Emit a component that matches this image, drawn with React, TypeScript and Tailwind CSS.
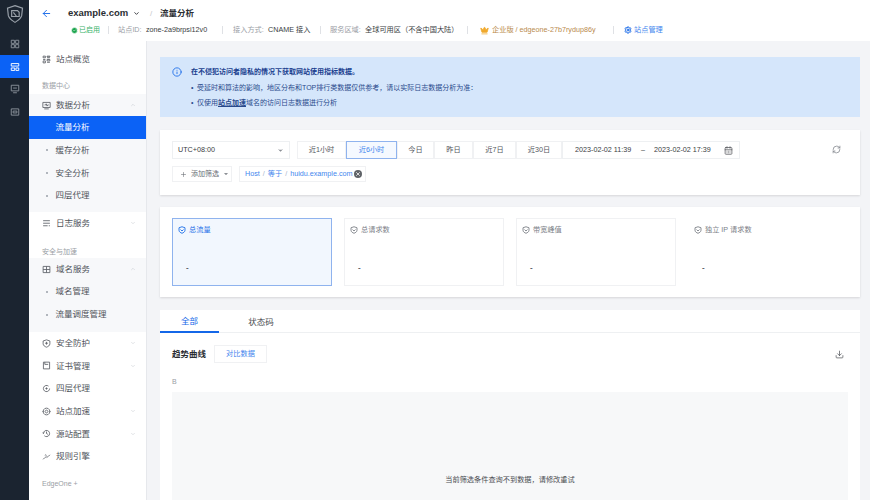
import { ArrowLeft, CalendarDays, ChevronDown, ChevronUp, CircleCheck, Crown, Download, Info, Plus, RefreshCw, Settings, X } from 'lucide-react'
import type { ReactNode } from 'react'

const font = 'font-["Liberation_Sans","Noto_Sans_CJK_SC",sans-serif]'

function Glyph({ children, className = '' }: { children: ReactNode; className?: string }) {
  return (
    <svg viewBox="0 0 16 16" fill="none" stroke="currentColor" strokeWidth={1.5} className={`shrink-0 ${className}`}>
      {children}
    </svg>
  )
}

const icons: Record<string, ReactNode> = {
  overview: <path d="M2 2h4v3H2zM9 2h5v1.500H9zM9 5h5M2 8h4M2 10.500h4v3.500H2zM9 8h5v2.500H9zM9 13h5" />,
  data: <path d="M1.500 2.500h13v9h-13zM4 14h8M4.500 7h2l1-2 1.500 4 1-2h2" />,
  log: <path d="M2 3h12M2 7.500h12M2 12h8M12 12h2" />,
  domain: <path d="M2 2.500h12v11H2zM8 2.500v11M2 8h12" />,
  shield: <path d="M8 1.500l6 2v5c0 3-3 5-6 6-3-1-6-3-6-6v-5zM8 5v5M5.500 7.500h5" />,
  cert: <path d="M2.500 2h11v12h-11zM5 2v4h6" />,
  layer4: <path d="M13.500 8a5.500 5.500 0 1 1-2-4.200M8 6v4M6 8h4" />,
  speed: <path d="M8 2a6 6 0 1 1-.01 0M8 5.500a2.500 2.500 0 1 1-.01 0M1 8h2M13 8h2" />,
  origin: <path d="M2.500 8a5.500 5.500 0 1 1 1.700 4M8 4.500V8l2.500 1.500M1 6.500l1.500 1.500L4 6.500" />,
  rule: <path d="M2 13l3-3c1-1 2-1 3 0M8 8c1 1 2 1 3 0l3-3M5 6a2 2 0 0 1 3 0" />,
}

type NavRow = { label: string; icon?: string; chevron?: 'up' | 'down'; sub?: boolean; active?: boolean }

function Row({ label, icon, chevron, sub, active }: NavRow) {
  return (
    <div className={`h-[22.7px] flex items-center ${active ? 'bg-[#0b62f6] text-white' : 'text-[#50545b]'} ${sub ? 'pl-[26.5px]' : 'pl-[13px]'} pr-[10px] text-[8.500px]`}>
      {sub && !active && <span className="absolute ml-[-10px] w-[2px] h-[2px] bg-[#9aa0a8] rounded-full" />}
      {icon && <Glyph className="w-[9px] h-[9px] mr-[5px] text-[#5b5f66]">{icons[icon]}</Glyph>}
      <span className="flex-1 whitespace-nowrap">{label}</span>
      {chevron === 'up' && <ChevronUp className="w-[6px] h-[6px] text-[#c3c6cc]" />}
      {chevron === 'down' && <ChevronDown className="w-[6px] h-[6px] text-[#c3c6cc]" />}
    </div>
  )
}

function SectionLabel({ text, className = '' }: { text: string; className?: string }) {
  return <div className={`pl-[13px] text-[7px] text-[#9a9ea5] h-[14px] leading-[14px] ${className}`}>{text}</div>
}

function Sep() {
  return <span className="w-px h-[8px] shrink-0 bg-[#dfe1e5]" />
}

function Metric({ label, active, plain }: { label: string; active?: boolean; plain?: boolean }) {
  return (
    <div className={`w-[160px] h-[68px] pt-[6px] px-[5px] flex flex-col border ${active ? 'bg-[#f2f7fe] border-[#8fb3ee]' : plain ? 'bg-white border-transparent' : 'bg-white border-[#f0f1f3]'}`}>
      <div className={`h-[10px] flex items-center gap-[3px] text-[7.200px] ${active ? 'text-[#1e6fe8]' : 'text-[#7d8188]'}`}>
        <svg viewBox="0 0 16 16" fill="none" stroke="currentColor" strokeWidth={1.800} className="w-[8px] h-[8px]">
          <path d="M8 1.500l6 2v5c0 3-3 5-6 6-3-1-6-3-6-6v-5zM5 7l3 3 3-3" />
        </svg>
        <span>{label}</span>
      </div>
      <div className="mt-[27px] ml-[8px] text-[8px] leading-[12px] font-bold text-[#55585e]">-</div>
    </div>
  )
}

const ranges = [
  { label: '近1小时', w: 'w-[49px]' },
  { label: '近6小时', w: 'w-[51px]', active: true },
  { label: '今日', w: 'w-[37px]' },
  { label: '昨日', w: 'w-[39px]' },
  { label: '近7日', w: 'w-[43px]' },
  { label: '近30日', w: 'w-[46px]' },
]

export default function App() {
  return (
    <div className={`w-[870px] h-[500px] overflow-hidden flex bg-[#f3f4f7] ${font}`}>
      {/* left rail */}
      <div className="w-[29px] shrink-0 bg-[#1b2430] flex flex-col items-center pt-[4px]">
        <svg viewBox="0 0 24 24" fill="none" stroke="#9aa1aa" strokeWidth={1.400} className="w-[20px] h-[20px] mb-[8px]">
          <path d="M12 2l9 3-1 9c-1 4-5 6-8 8-3-2-7-4-8-8L3 5z" />
          <path d="M8 8h7l2 2v5H8z" />
          <path d="M10 10l4 5" />
        </svg>
        <div className="h-[23px] w-full flex items-center justify-center text-[#8b929b]">
          <Glyph className="w-[10px] h-[10px]"><path d="M2 2h5v5H2zM9 2h5v5H9zM2 9h5v5H2zM9 9h5v5H9z" /></Glyph>
        </div>
        <div className="h-[23px] w-full flex items-center justify-center bg-[#0b62f6] text-white">
          <Glyph className="w-[10px] h-[10px]"><path d="M2 2.500h12v4H2zM2 9.500h5.500v4H2zM9.500 9.500H14v4H9.500z" /></Glyph>
        </div>
        <div className="h-[22px] w-full flex items-center justify-center text-[#8b929b]">
          <Glyph className="w-[10px] h-[10px]"><path d="M2 2h12v9H2zM5 14h6M5 6.500h6" /></Glyph>
        </div>
        <div className="h-[23px] w-full flex items-center justify-center text-[#8b929b]">
          <Glyph className="w-[10px] h-[10px]"><path d="M2 3h12v10H2zM5 6.500h6v3H5z" /></Glyph>
        </div>
      </div>

      <div className="flex-1 min-w-0 flex flex-col">
        {/* header */}
        <div className="h-[41px] shrink-0 bg-white pl-[12px] flex">
          <ArrowLeft className="w-[11px] h-[11px] mt-[8px] text-[#1467e8]" strokeWidth={2} />
          <div className="ml-[16px] flex flex-col">
            <div className="h-[17px] mt-[5px] flex items-center text-[9.500px] font-bold text-[#2b2e33] whitespace-nowrap">
              <span className="w-[65px]">example.com</span>
              <ChevronDown className="w-[7px] h-[7px]" strokeWidth={3} />
              <span className="w-[20px] pl-[10px] font-normal text-[8px] text-[#c5c8cd]">/</span>
              <span className="text-[8.500px]">流量分析</span>
            </div>
            <div className="h-[12px] mt-[2px] ml-[3px] flex items-center text-[7.200px] whitespace-nowrap text-[#9a9ea5]">
              <CircleCheck className="w-[7px] h-[7px] shrink-0 fill-[#17a34a] text-white" />
              <span className="w-[30px] shrink-0 text-[7px] pl-[1px] text-[#3ab36a]">已启用</span>
              <Sep />
              <span className="ml-[9px] w-[28px] shrink-0">站点ID:</span>
              <span className="w-[76px] shrink-0 text-[#3a3d42]">zone-2a9brpsi12v0</span>
              <Sep />
              <span className="ml-[10px] w-[35px] shrink-0">接入方式:</span>
              <span className="w-[52px] shrink-0 text-[#3a3d42]">CNAME 接入</span>
              <Sep />
              <span className="ml-[9px] w-[35px] shrink-0">服务区域:</span>
              <span className="w-[102px] shrink-0 text-[#3a3d42]">全球可用区（不含中国大陆）</span>
              <Sep />
              <Crown className="ml-[12px] w-[9px] h-[9px] shrink-0 fill-[#f0a92c] text-[#f0a92c]" />
              <span className="ml-[3px] w-[121px] shrink-0 text-[#b98a4d]">企业版 / edgeone-27b7rydup86y</span>
              <Sep />
              <Settings className="ml-[10px] w-[8px] h-[8px] shrink-0 text-[#1467e8]" strokeWidth={3} />
              <span className="ml-[2px] text-[#3f86ee]">站点管理</span>
            </div>
          </div>
        </div>

        <div className="flex-1 min-h-0 flex">
          {/* sidebar */}
          <div className="w-[118px] shrink-0 bg-white pt-[7px] border-r border-[#e6e8ec]">
            <Row label="站点概览" icon="overview" />
            <SectionLabel text="数据中心" className="mt-[8px] mb-[1px]" />
            <div className="bg-[#f7f8fa] pb-[5px]">
              <Row label="数据分析" icon="data" chevron="up" />
              <Row label="流量分析" sub active />
              <Row label="缓存分析" sub />
              <Row label="安全分析" sub />
              <Row label="四层代理" sub />
            </div>
            <Row label="日志服务" icon="log" chevron="down" />
            <SectionLabel text="安全与加速" className="mt-[10px] mb-[-1px]" />
            <div className="bg-[#f7f8fa] pb-[6px]">
              <Row label="域名服务" icon="domain" chevron="up" />
              <Row label="域名管理" sub />
              <Row label="流量调度管理" sub />
            </div>
            <Row label="安全防护" icon="shield" chevron="down" />
            <Row label="证书管理" icon="cert" chevron="down" />
            <Row label="四层代理" icon="layer4" />
            <Row label="站点加速" icon="speed" chevron="down" />
            <Row label="源站配置" icon="origin" chevron="down" />
            <Row label="规则引擎" icon="rule" />
            <SectionLabel text="EdgeOne +" className="mt-[9px] mb-[3px]" />
            <Row label="密钥管理" icon="log" />
          </div>

          {/* main */}
          <div className="flex-1 min-w-0 pt-[16px] pl-[13px] pr-[10px] flex flex-col">
            <div className="h-[60px] shrink-0 bg-[#d5e6fb] pl-[12px] pt-[10px] flex text-[7px] text-[#2a4a8c]">
              <Info className="w-[10px] h-[10px] text-[#1467e8]" strokeWidth={2} />
              <div className="ml-[9px] flex flex-col">
                <div className="h-[10px] leading-[10px] font-bold text-[#1b3f8f]">在不侵犯访问者隐私的情况下获取网站使用指标数据。</div>
                <div className="h-[10px] leading-[10px] mt-[5.500px] flex">
                  <span className="w-[6px]">•</span>受延时和算法的影响，地区分布和TOP排行类数据仅供参考，请以实际日志数据分析为准：
                </div>
                <div className="h-[10px] leading-[10px] mt-[5.500px] flex">
                  <span className="w-[6px]">•</span>仅使用<b className="underline">站点加速</b>域名的访问日志数据进行分析
                </div>
              </div>
            </div>

            <div className="h-[65px] shrink-0 mt-[13px] bg-white shadow-[0_1px_2px_rgba(0,0,0,0.12)] pl-[12px] pt-[11px] relative text-[7.200px] text-[#4a4d52]">
              <div className="flex h-[18px]">
                <div className="w-[118px] border border-[#eef0f2] flex items-center justify-between px-[5px] text-[#3a3d42]">
                  <span>UTC+08:00</span>
                  <ChevronDown className="w-[7px] h-[7px] fill-[#8b8f96] text-[#8b8f96]" />
                </div>
                <div className="ml-[7px] flex">
                  {ranges.map(r => (
                    <div key={r.label} className={`${r.w} flex items-center justify-center border ${r.active ? 'bg-[#f5f9ff] border-[#8fb3ee] text-[#3f86ee]' : 'border-[#f0f1f3] text-[#55585e]'}`}>
                      {r.label}
                    </div>
                  ))}
                </div>
                <div className="w-[178px] border border-[#eef0f2] flex items-center pl-[12px] text-[#3a3d42] whitespace-nowrap">
                  <span className="w-[57px]">2023-02-02 11:39</span>
                  <span className="w-[22px] text-center">–</span>
                  <span className="w-[57px]">2023-02-02 17:39</span>
                  <CalendarDays className="ml-[13px] w-[9px] h-[9px] text-[#55585e]" />
                </div>
              </div>
              <div className="flex h-[16px] mt-[7px]">
                <div className="w-[60px] border border-[#f0f1f3] flex items-center pl-[7px] text-[7px] text-[#6b6f76]">
                  <Plus className="w-[7px] h-[7px] mr-[4px]" />
                  <span className="whitespace-nowrap">添加筛选</span>
                  <ChevronDown className="w-[6px] h-[6px] ml-[4px] fill-[#6b6f76]" />
                </div>
                <div className="ml-[7px] w-[127px] border border-[#f0f1f3] flex items-center pl-[5px] text-[#3f86ee] whitespace-nowrap">
                  <span>Host</span>
                  <span className="mx-[3px] text-[#a9b7cc]">/</span>
                  <span>等于</span>
                  <span className="mx-[3px] text-[#a9b7cc]">/</span>
                  <span className="w-[64px]">huidu.example.com</span>
                  <span className="w-[8px] h-[8px] rounded-full bg-[#5f6368] flex items-center justify-center shrink-0">
                    <X className="w-[6px] h-[6px] text-white" strokeWidth={3} />
                  </span>
                </div>
              </div>
              <RefreshCw className="absolute top-[15px] right-[19px] w-[9px] h-[9px] text-[#7d8188]" />
            </div>

            <div className="h-[90px] shrink-0 mt-[12px] bg-white shadow-[0_1px_2px_rgba(0,0,0,0.12)] pl-[12px] pt-[11px] flex gap-[12px]">
              <Metric label="总流量" active />
              <Metric label="总请求数" />
              <Metric label="带宽峰值" />
              <Metric label="独立 IP 请求数" plain />
            </div>

            <div className="flex-1 min-h-0 mt-[13px] bg-white flex flex-col">
              <div className="h-[23px] shrink-0 flex border-b border-[#eef0f2] text-[8.500px]">
                <div className="w-[59px] h-[23px] pt-[1px] flex items-center justify-center border-b-2 border-[#1467e8] text-[#1467e8]">全部</div>
                <div className="w-[84px] h-[23px] pt-[1px] flex items-center justify-center text-[#4a4d52]">状态码</div>
              </div>
              <div className="h-[18px] shrink-0 mt-[12px] px-[12px] flex items-center">
                <span className="w-[42px] text-[8.500px] font-bold text-[#2b2e33]">趋势曲线</span>
                <div className="w-[53px] h-[18px] border border-[#f0f1f3] flex items-center justify-center text-[7.200px] text-[#3f86ee]">对比数据</div>
                <Download className="ml-auto mr-[4px] w-[9px] h-[9px] text-[#55585e]" />
              </div>
              <div className="mt-[14px] px-[12px] text-[7px] leading-[10px] text-[#9a9ea5]">B</div>
              <div className="mx-[12px] mt-[5px] flex-1 bg-[#f7f8f9] flex items-end justify-center pb-[14px] text-[7.200px] text-[#4a4d52]">
                当前筛选条件查询不到数据，请修改重试
              </div>
            </div>
          </div>
        </div>
      </div>
    </div>
  )
}
